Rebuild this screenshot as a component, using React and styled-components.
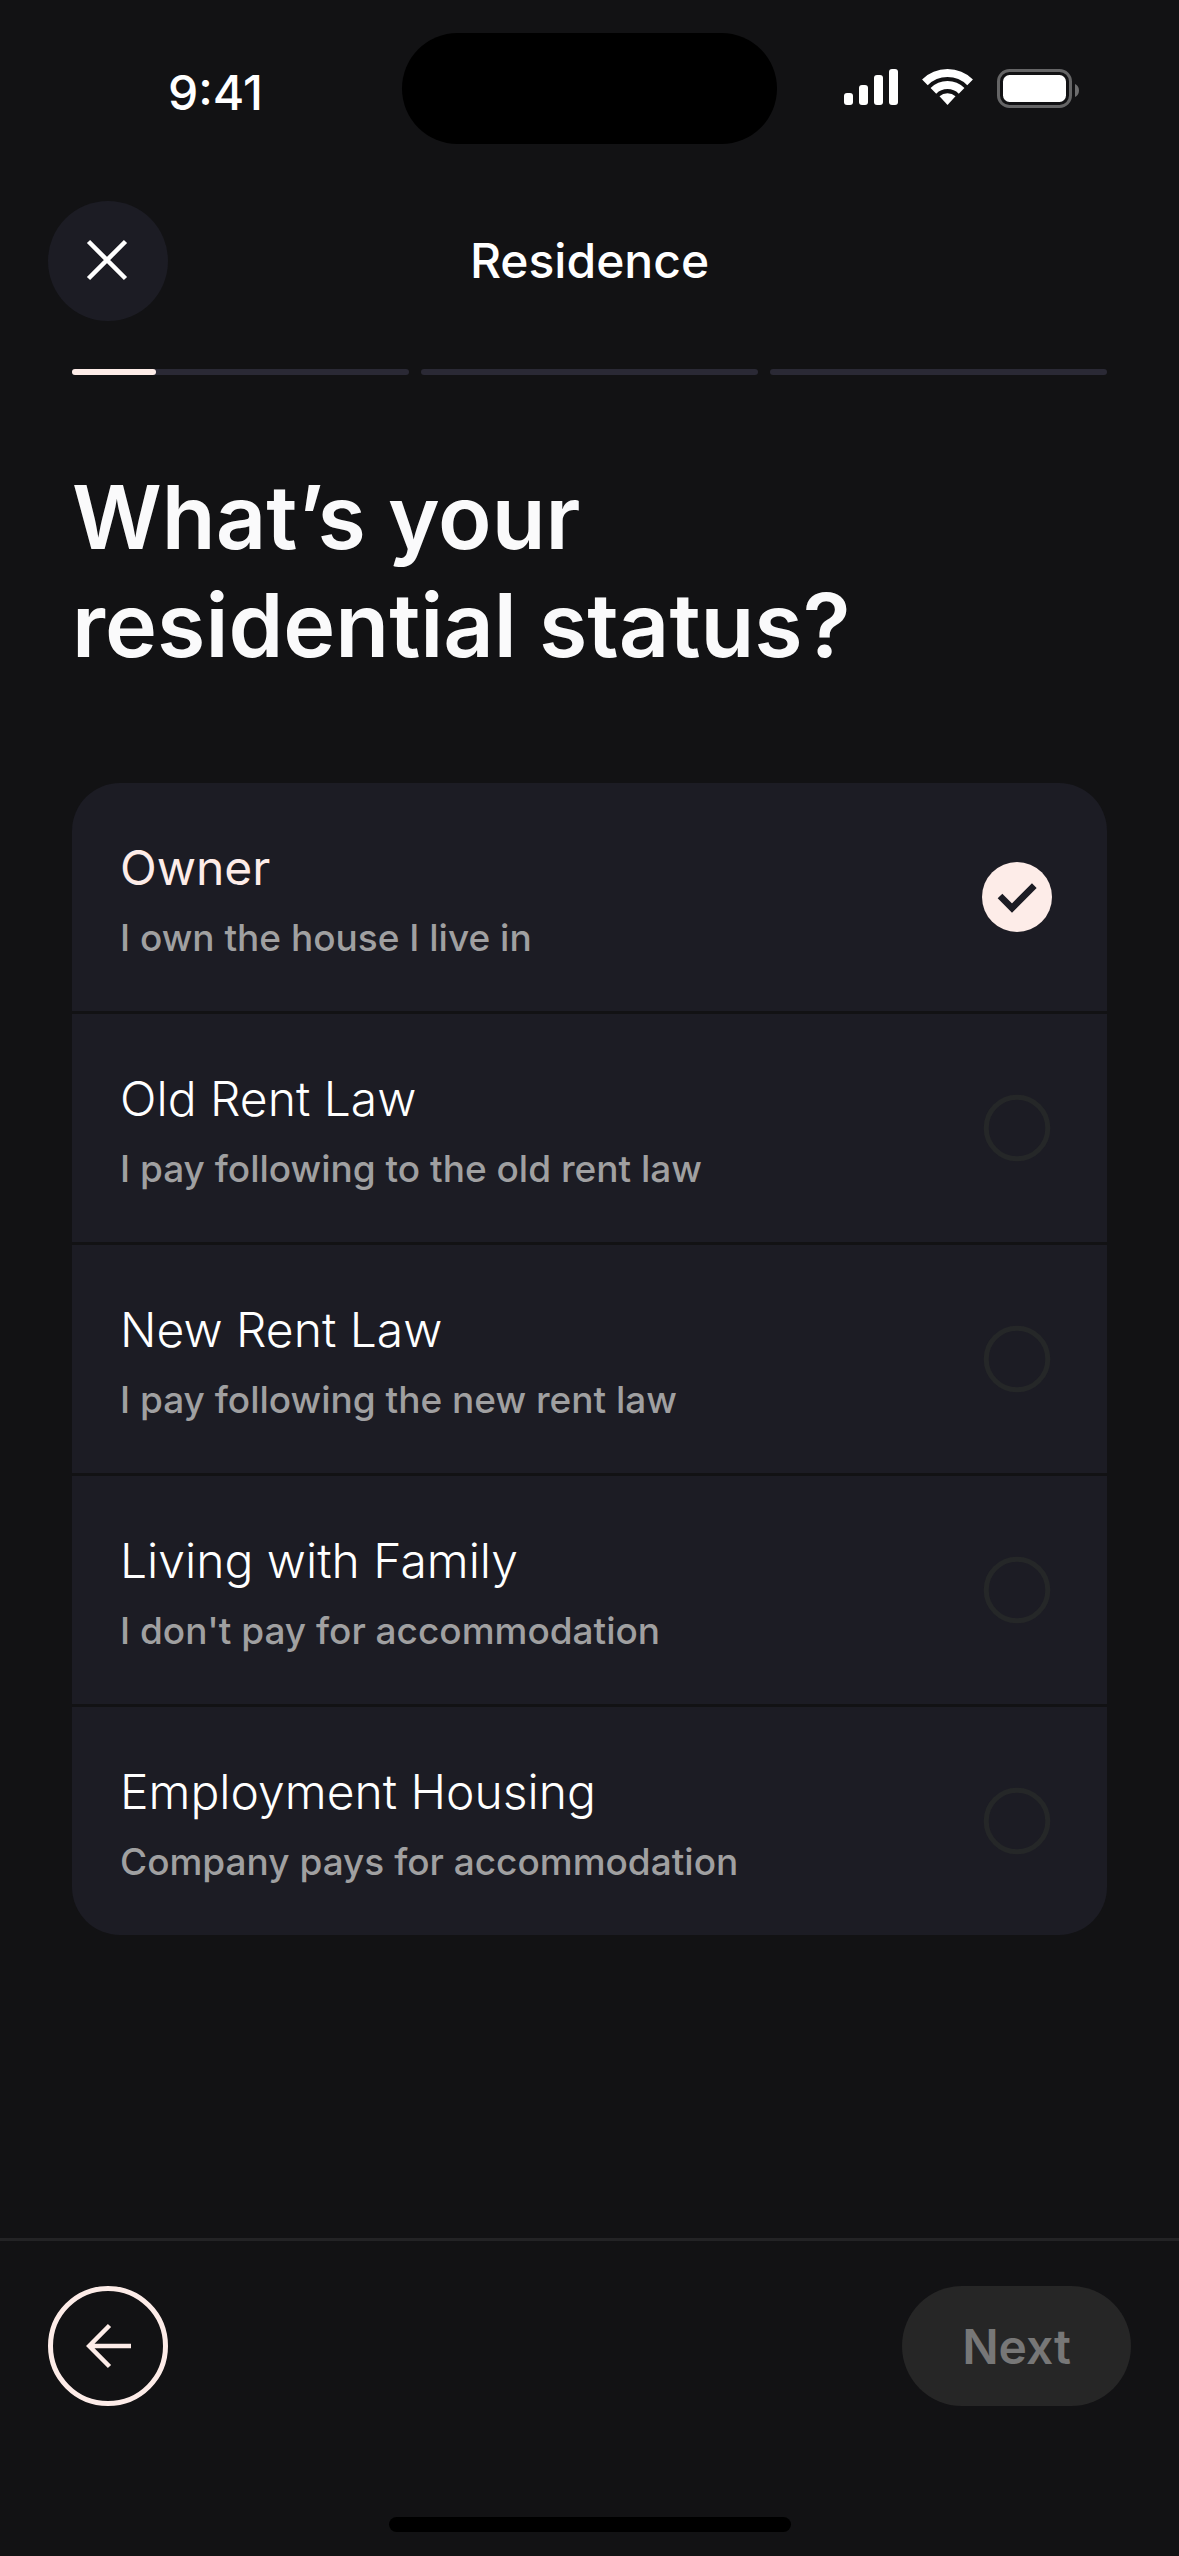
import React, { useState } from 'react';
import styled, { createGlobalStyle } from 'styled-components';

const options = [
  { id: 'owner', title: 'Owner', hint: 'I own the house I live in' },
  { id: 'old-rent', title: 'Old Rent Law', hint: 'I pay following to the old rent law' },
  { id: 'new-rent', title: 'New Rent Law', hint: 'I pay following the new rent law' },
  { id: 'family', title: 'Living with Family', hint: "I don't pay for accommodation" },
  { id: 'employment', title: 'Employment Housing', hint: 'Company pays for accommodation' },
];

// share of each step that is already done, in percent
const steps = [25, 0, 0];

const SignalIcon = () => (
  <svg width="54" height="36" viewBox="0 0 54 36" fill="#fff" aria-hidden="true">
    <rect x="0" y="24" width="9" height="12" rx="3" />
    <rect x="15" y="16" width="9" height="20" rx="3" />
    <rect x="30" y="6" width="9" height="30" rx="3" />
    <rect x="45" y="0" width="9" height="36" rx="3" />
  </svg>
);

const WifiIcon = () => (
  <svg width="51" height="36" viewBox="0 0 51 36" fill="none" aria-hidden="true">
    <path d="M2.9 13.4A32 32 0 0 1 48.1 13.4" stroke="#fff" strokeWidth="8" />
    <path d="M11.4 21.9A20 20 0 0 1 39.6 21.9" stroke="#fff" strokeWidth="8" />
    <path d="M17.5 27.2A12 12 0 0 1 33.5 27.2L25.5 36Z" fill="#fff" />
  </svg>
);

const BatteryIcon = () => (
  <svg width="82" height="39" viewBox="0 0 82 39" fill="none" aria-hidden="true">
    <rect x="1.5" y="1.5" width="72" height="36" rx="11" stroke="#656566" strokeWidth="3" />
    <rect x="6" y="6" width="63" height="27" rx="6.5" fill="#fff" />
    <path d="M78 15C80.4 16 82 18.3 82 21.5S80.4 27 78 28Z" fill="#6d6d6e" />
  </svg>
);

const CloseIcon = () => (
  <svg width="72" height="72" viewBox="0 0 72 72" fill="none" aria-hidden="true">
    <path d="M16.5 16.5L53.5 53.5M53.5 16.5L16.5 53.5" stroke="#fff" strokeWidth="4.5" />
  </svg>
);

const ArrowLeftIcon = () => (
  <svg width="72" height="72" viewBox="0 0 72 72" fill="none" aria-hidden="true">
    <path d="M59 36H18M37.5 15.5L17.2 36L37.5 56.5" stroke="#fdece8" strokeWidth="4.5" />
  </svg>
);

const RadioMark = ({ checked }) => (
  <svg width="72" height="72" viewBox="0 0 72 72" fill="none" aria-hidden="true">
    {checked ? (
      <>
        <circle cx="36" cy="36" r="35" fill="#fdece8" />
        <path d="M19 35L31 47L53.3 24.7" stroke="#1c1c24" strokeWidth="6.6" />
      </>
    ) : (
      <circle cx="36" cy="36" r="30.8" stroke="#252728" strokeWidth="5" />
    )}
  </svg>
);

const App = () => {
  const [selected, setSelected] = useState('owner');

  return (
    <>
      <GlobalStyle />
      <Screen>
        <StatusBar>
          <Time>9:41</Time>
          <Island />
          <StatusIcons>
            <SignalIcon />
            <WifiIcon />
            <BatteryIcon />
          </StatusIcons>
        </StatusBar>

        <Header>
          <CloseButton type="button" aria-label="Close">
            <CloseIcon />
          </CloseButton>
          <HeaderTitle>Residence</HeaderTitle>
        </Header>

        <Content>
          <Progress>
            {steps.map((done, index) => (
              <ProgressStep key={index}>
                {done > 0 && <ProgressFill style={{ width: `${done}%` }} />}
              </ProgressStep>
            ))}
          </Progress>

          <Question id="question">
            What’s your
            <br />
            residential status?
          </Question>

          <OptionList role="radiogroup" aria-labelledby="question">
            {options.map(({ id, title, hint }) => (
              <Option key={id} htmlFor={id}>
                <OptionText>
                  <OptionTitle $selected={selected === id}>{title}</OptionTitle>
                  <OptionHint>{hint}</OptionHint>
                </OptionText>
                <HiddenRadio
                  id={id}
                  type="radio"
                  name="status"
                  checked={selected === id}
                  onChange={() => setSelected(id)}
                />
                <RadioMark checked={selected === id} />
              </Option>
            ))}
          </OptionList>
        </Content>

        <Footer>
          <Actions>
            <BackButton type="button" aria-label="Back">
              <ArrowLeftIcon />
            </BackButton>
            <NextButton type="button" disabled>
              Next
            </NextButton>
          </Actions>
          <HomeIndicator />
        </Footer>
      </Screen>
    </>
  );
};

const GlobalStyle = createGlobalStyle`
  * {
    box-sizing: border-box;
  }

  body {
    margin: 0;
    background: #121214;
    color: #fff;
    font-family: Inter, 'Liberation Sans', sans-serif;
  }

  button {
    font-family: inherit;
    cursor: pointer;
  }

  svg {
    display: block;
    flex: none;
  }
`;

const Screen = styled.div`
  display: flex;
  flex-direction: column;
  min-height: 100vh;
  background: #121214;
`;

/* Status bar */
const StatusBar = styled.div`
  display: grid;
  grid-template-columns: 1fr 375px 1fr;
  align-items: center;
  padding: 33px 0 57px;
`;

const Time = styled.span`
  padding: 8px 0 0 168px;
  font-size: 48px;
  font-weight: 500;
  line-height: 60px;
`;

const Island = styled.div`
  height: 111px;
  border-radius: 56px;
  background: #000;
`;

const StatusIcons = styled.div`
  display: flex;
  justify-content: flex-end;
  gap: 24px;
  padding-right: 100px;
`;

/* Header */
const Header = styled.header`
  display: grid;
  grid-template-columns: 1fr auto 1fr;
  align-items: center;
  padding: 0 48px;
`;

const RoundButton = styled.button`
  display: flex;
  align-items: center;
  justify-content: center;
  width: 120px;
  height: 120px;
  padding: 0;
  border: none;
  border-radius: 50%;
`;

const CloseButton = styled(RoundButton)`
  background: #1c1c24;
`;

const HeaderTitle = styled.h1`
  margin: 0;
  font-size: 48px;
  font-weight: 500;
  line-height: 72px;
`;

const Content = styled.main`
  padding: 48px 72px;
`;

const Progress = styled.div`
  display: flex;
  gap: 12px;
`;

const ProgressStep = styled.div`
  flex: 1;
  height: 6px;
  border-radius: 3px;
  background: #2a2935;
`;

const ProgressFill = styled.div`
  height: 100%;
  border-radius: 3px;
  background: #fdece8;
`;

const Question = styled.h2`
  margin: 88px 0 104px;
  color: #fafafb;
  font-size: 88px;
  font-weight: 600;
  line-height: 108px;
`;

/* Options */
const OptionList = styled.div`
  display: flex;
  flex-direction: column;
  gap: 3px;
  overflow: hidden;
  border-radius: 48px;
`;

const Option = styled.label`
  position: relative;
  display: flex;
  align-items: center;
  justify-content: space-between;
  padding: 49px 54px 49px 48px;
  background: #1c1c24;
  cursor: pointer;
`;

const OptionText = styled.span`
  display: flex;
  flex-direction: column;
  gap: 10px;
`;

const OptionTitle = styled.span`
  color: ${({ $selected }) => ($selected ? '#fdece8' : '#fff')};
  font-size: 48px;
  font-weight: ${({ $selected }) => ($selected ? 400 : 300)};
  line-height: 72px;
`;

const OptionHint = styled.span`
  color: #a0a0a1;
  font-size: 37px;
  font-weight: 500;
  line-height: 48px;
`;

const HiddenRadio = styled.input`
  position: absolute;
  inset: 0;
  margin: 0;
  opacity: 0;
  cursor: pointer;
`;

/* Footer */
const Footer = styled.footer`
  display: flex;
  flex-direction: column;
  gap: 111px;
  margin-top: auto;
  padding: 45px 48px 24px;
  border-top: 3px solid #232325;
`;

const Actions = styled.div`
  display: flex;
  justify-content: space-between;
`;

const BackButton = styled(RoundButton)`
  border: 5px solid #fdece8;
  background: none;
`;

const NextButton = styled.button`
  height: 120px;
  padding: 0 60px;
  border: none;
  border-radius: 60px;
  background: #262626;
  color: #777;
  font-size: 48px;
  font-weight: 600;
`;

const HomeIndicator = styled.div`
  align-self: center;
  width: 402px;
  height: 15px;
  border-radius: 8px;
  background: #000;
`;

export default App;
